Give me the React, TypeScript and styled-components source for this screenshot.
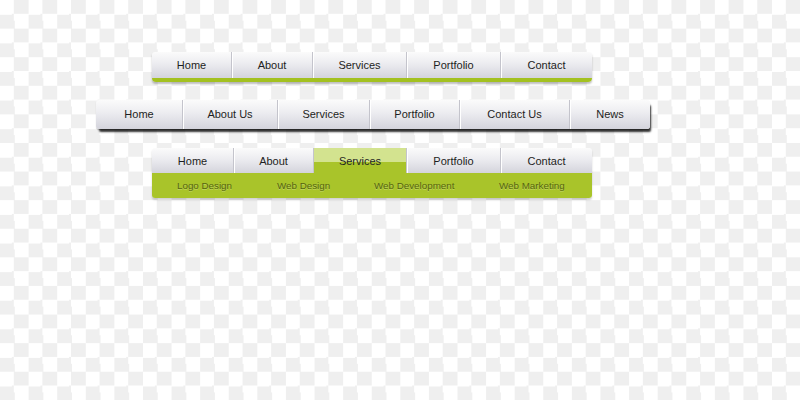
import React from 'react';
import styled, { createGlobalStyle } from 'styled-components';

const GlobalStyle = createGlobalStyle`
    html, body {
        margin: 0;
        padding: 0;
    }
    body {
        width: 800px;
        height: 400px;
        overflow: hidden;
        font-family: "Liberation Sans", Arial, sans-serif;
        background: conic-gradient(#efefef 25%, #ffffff 0 50%, #efefef 0 75%, #ffffff 0) 0 0 / 28.6px 28.6px;
    }
`;

const Page = styled.div`
    display: flex;
    flex-direction: column;
    align-items: flex-start;
    padding-top: 52px;
`;

const Bar = styled.nav<{ $left: number; $top: number }>`
    display: flex;
    margin-left: ${(p) => p.$left}px;
    margin-top: ${(p) => p.$top}px;
    border-radius: 3px;
`;

const GreenLineBar = styled(Bar)`
    border-bottom: 4px solid #a3c120;
    border-radius: 3px 3px 4px 4px;
    box-shadow: 0 2px 2px rgba(0, 0, 0, 0.25);
`;

const ShadowBar = styled(Bar)`
    box-shadow: 2px 4px 2px -1px rgba(0, 0, 0, 0.8), 0 1px 1px rgba(0, 0, 0, 0.2);
`;

const Tab = styled.a<{ $w: number; $h: number; $first?: boolean; $active?: boolean }>`
    display: flex;
    align-items: center;
    justify-content: center;
    width: ${(p) => p.$w}px;
    height: ${(p) => p.$h}px;
    box-sizing: border-box;
    font-size: 11px;
    color: #1e1e22;
    text-decoration: none;
    background: ${(p) =>
        p.$active
            ? 'linear-gradient(to bottom, #d3e38f 0, #d3e38f 14px, #a9c42a 14px, #a9c42a 100%)'
            : 'linear-gradient(to bottom, #fbfbfb 0%, #ececf0 45%, #d4d4dc 100%)'};
    border-left: ${(p) => (p.$first ? 'none' : '1px solid #c4c4cc')};
    box-shadow: ${(p) => (p.$first || p.$active ? 'none' : 'inset 1px 0 0 #ffffff')};
    &:first-child {
        border-top-left-radius: 3px;
    }
    &:last-child {
        border-top-right-radius: 3px;
    }
`;

const PlainTab = styled(Tab)`
    padding-bottom: 2px;
    &:first-child {
        border-bottom-left-radius: 3px;
    }
    &:last-child {
        border-bottom-right-radius: 3px;
    }
`;

const DropMenu = styled.div`
    display: flex;
    flex-direction: column;
    margin-left: 152px;
    margin-top: 19px;
    width: 440px;
    border-radius: 3px;
    box-shadow: 0 2px 2px rgba(0, 0, 0, 0.18);
`;

const TabRow = styled.div`
    display: flex;
`;

const SubBar = styled.div`
    display: flex;
    align-items: center;
    height: 25px;
    padding-left: 25px;
    background: #a9c42a;
    border-radius: 0 0 3px 3px;
`;

const SubLink = styled.a<{ $w: number }>`
    width: ${(p) => p.$w}px;
    font-size: 9.8px;
    color: #56650f;
    text-shadow: 0 1px 0 rgba(255, 255, 255, 0.25);
    text-decoration: none;
    white-space: nowrap;
`;

const menuOne = [
    { label: 'Home', w: 79 },
    { label: 'About', w: 81 },
    { label: 'Services', w: 94 },
    { label: 'Portfolio', w: 94 },
    { label: 'Contact', w: 92 },
];

const menuTwo = [
    { label: 'Home', w: 86 },
    { label: 'About Us', w: 95 },
    { label: 'Services', w: 92 },
    { label: 'Portfolio', w: 90 },
    { label: 'Contact Us', w: 110 },
    { label: 'News', w: 81 },
];

const menuThree = [
    { label: 'Home', w: 81 },
    { label: 'About', w: 80 },
    { label: 'Services', w: 93, active: true },
    { label: 'Portfolio', w: 94 },
    { label: 'Contact', w: 92 },
];

const subItems = [
    { label: 'Logo Design', w: 100 },
    { label: 'Web Design', w: 97 },
    { label: 'Web Development', w: 125 },
    { label: 'Web Marketing', w: 90 },
];

const App: React.FC = () => {
    return (
        <>
            <GlobalStyle />
            <Page>
                <GreenLineBar $left={152} $top={0}>
                    {menuOne.map((item, i) => (
                        <Tab key={item.label} $w={item.w} $h={26} $first={i === 0}>
                            {item.label}
                        </Tab>
                    ))}
                </GreenLineBar>

                <ShadowBar $left={96} $top={18}>
                    {menuTwo.map((item, i) => (
                        <PlainTab key={item.label} $w={item.w} $h={29} $first={i === 0}>
                            {item.label}
                        </PlainTab>
                    ))}
                </ShadowBar>

                <DropMenu>
                    <TabRow>
                        {menuThree.map((item, i) => (
                            <Tab
                                key={item.label}
                                $w={item.w}
                                $h={25}
                                $first={i === 0}
                                $active={item.active}
                            >
                                {item.label}
                            </Tab>
                        ))}
                    </TabRow>
                    <SubBar>
                        {subItems.map((item) => (
                            <SubLink key={item.label} $w={item.w}>
                                {item.label}
                            </SubLink>
                        ))}
                    </SubBar>
                </DropMenu>
            </Page>
        </>
    );
};

export default App;
